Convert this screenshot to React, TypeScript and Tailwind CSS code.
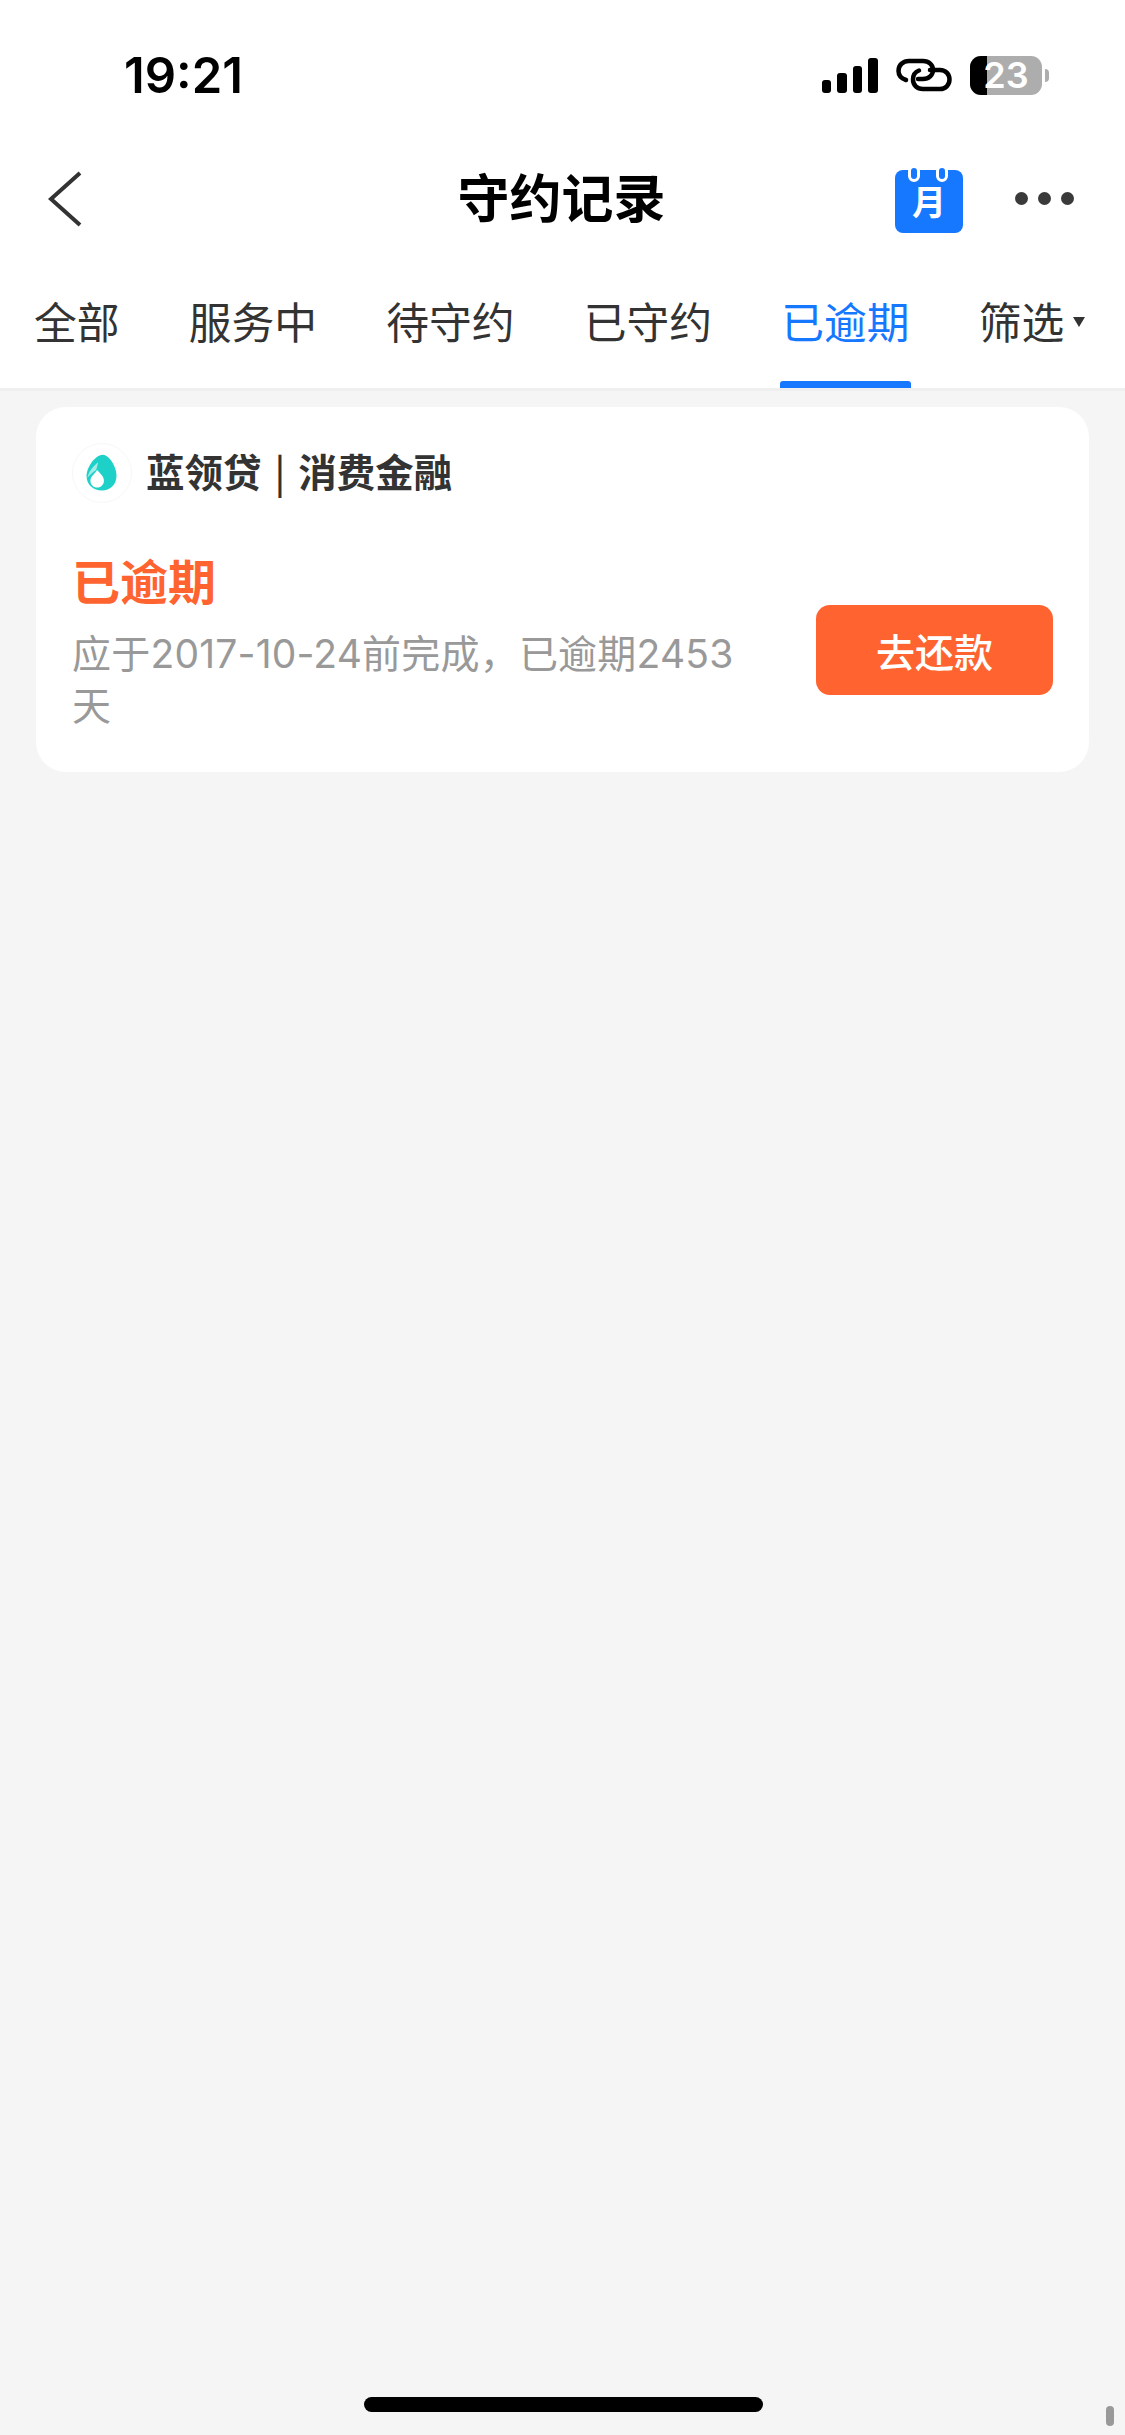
const CJK = '"Noto Sans CJK SC", "Noto Sans", sans-serif';

const tabs = ['全部', '服务中', '待守约', '已守约', '已逾期'];

function StatusIcons() {
  return (
    <div className="flex items-center">
      <div className="flex items-end gap-[6px]">
        <div className="h-[13px] w-[9px] rounded-[3px] bg-black" />
        <div className="h-[20px] w-[10px] rounded-[3px] bg-black" />
        <div className="h-[27px] w-[9px] rounded-[3px] bg-black" />
        <div className="h-[35px] w-[10px] rounded-[3px] bg-black" />
      </div>
      <svg className="ml-[18px]" width="56" height="34" viewBox="0 0 56 34" fill="none" stroke="#000" strokeWidth="4.500" strokeLinecap="round">
        <path d="M10 22 C4 20 2.500 16 2.500 13 C2.500 7 7 3 13 3 L27 3 C33 3 37 7 37 12 C37 17 33 21 27 21 L22 21" />
        <path d="M34 12 L44 12 C50 12 53.500 16.500 53.500 21.500 C53.500 27 49.500 31 44 31 L27 31 C21 31 17 27 17 21.500 C17 17.500 19 14 23 12.500" />
      </svg>
      <div className="relative ml-[18px] flex h-[39px] w-[72px] items-center justify-center rounded-[11px] bg-[#adadad]">
        <div className="absolute inset-y-0 left-0 w-[17px] rounded-l-[11px] bg-black" />
        <span className="relative text-[36px] font-semibold leading-none text-white" style={{ fontFamily: 'Inter, sans-serif' }}>
          23
        </span>
      </div>
      <div className="ml-[3px] h-[13px] w-[4px] rounded-r-full bg-[#adadad]" />
    </div>
  );
}

function CalendarIcon() {
  return (
    <div className="relative h-[68px] w-[68px] pt-[5px]">
      <div className="flex h-[63px] w-[68px] items-center justify-center rounded-[8px] bg-[#1677ff] text-[34px] font-semibold leading-none text-white">
        月
      </div>
      <div className="absolute left-[13px] top-0 h-[17px] w-[12px] rounded-full border-[3px] border-white bg-[#1677ff]" />
      <div className="absolute left-[41px] top-0 h-[17px] w-[12px] rounded-full border-[3px] border-white bg-[#1677ff]" />
    </div>
  );
}

function BrandLogo() {
  return (
    <div className="flex h-[60px] w-[60px] items-center justify-center rounded-full border border-[#f7f7f7]">
      <svg width="60" height="60" viewBox="0 0 60 60">
        <path d="M31 11 C37 11 45 23 45 33 C45 42 38 48 30 48 C21 48 14 42 14 33 C14 24 23 11 31 11 Z" fill="#1dd1c9" />
        <path d="M26 19 C21 23 16 29 15 35 C18 31 21 29 24 27 Z" fill="#a5ece8" />
        <path d="M25 27 C28 31 32 33 32 38 C32 42 29 45 25 45 C21 45 18 42 18 38 C18 33 23 31 25 27 Z" fill="#fff" />
      </svg>
    </div>
  );
}

export default function App() {
  return (
    <div className="relative flex min-h-[2435px] w-[1125px] flex-col bg-[#f5f5f5]" style={{ fontFamily: CJK }}>
      <div className="border-b-[3px] border-[#efefef] bg-white">
        <div className="flex h-[150px] items-center justify-between pl-[124px] pr-[76px]">
          <span className="text-[49px] font-semibold leading-none text-black" style={{ fontFamily: 'Inter, sans-serif' }}>
            19:21
          </span>
          <StatusIcons />
        </div>

        <div className="flex h-[97px] items-center justify-between pl-[48px] pr-[51px]">
          <svg width="34" height="56" viewBox="0 0 34 56" fill="none" stroke="#333" strokeWidth="4">
            <path d="M32 2 L3 28 L32 54" />
          </svg>
          <h1 className="ml-[146px] mt-[-6px] text-[52px] font-bold leading-none text-black">守约记录</h1>
          <div className="flex items-center gap-[52px]">
            <CalendarIcon />
            <div className="flex gap-[10px]">
              <div className="h-[13px] w-[13px] rounded-full bg-[#3a3a3a]" />
              <div className="h-[13px] w-[13px] rounded-full bg-[#3a3a3a]" />
              <div className="h-[13px] w-[13px] rounded-full bg-[#3a3a3a]" />
            </div>
          </div>
        </div>

        <div className="flex h-[141px] items-start gap-[69.250px] pl-[34px] pt-[48px]">
          {tabs.map((tab) => (
            <div key={tab} className="relative h-[93px]">
              <span className={`block text-[42.750px] leading-[50px] ${tab === '已逾期' ? 'text-[#1677ff]' : 'text-[#333333]'}`}>
                {tab}
              </span>
              {tab === '已逾期' && <div className="absolute -inset-x-[1px] bottom-0 h-[7px] rounded-t-[3px] bg-[#1677ff]" />}
            </div>
          ))}
          <div className="flex items-center">
            <span className="text-[42.750px] leading-[50px] text-[#333333]">筛选</span>
            <div className="ml-[9px] mt-[3px] h-0 w-0 border-x-[6px] border-t-[10px] border-x-transparent border-t-[#333333]" />
          </div>
        </div>
      </div>

      <div className="mx-[36px] mt-[16px] rounded-[30px] bg-white pb-[39px] pl-[36px] pr-[36px] pt-[36px]">
        <div className="flex h-[60px] items-center gap-[14px]">
          <BrandLogo />
          <span className="mt-[-5px] text-[38.500px] font-bold leading-none text-[#333333]">
            蓝领贷<span className="mx-[13px] font-medium">|</span>消费金融
          </span>
        </div>

        <div className="mt-[52px] flex items-center justify-between">
          <div className="w-[690px]">
            <div className="text-[48px] font-bold leading-[48px] text-[#ff6430]">已逾期</div>
            <p className="mt-[25px] mb-[1px] text-[39px] leading-[52px] tracking-[0.2px] text-[#999999]" style={{ fontFamily: `Inter, ${CJK}` }}>
              应于2017-10-24前完成，已逾期2453天
            </p>
          </div>
          <button type="button" className="mt-[12px] h-[90px] w-[237px] rounded-[14px] bg-[#ff6430] text-[39px] font-medium leading-none text-white">
            去还款
          </button>
        </div>
      </div>

      <div className="absolute left-[364px] top-[2397px] h-[15px] w-[399px] rounded-full bg-black" />
      <div className="absolute left-[1106px] top-[2406px] h-[20px] w-[8px] rounded-full bg-[#999999]" />
    </div>
  );
}
